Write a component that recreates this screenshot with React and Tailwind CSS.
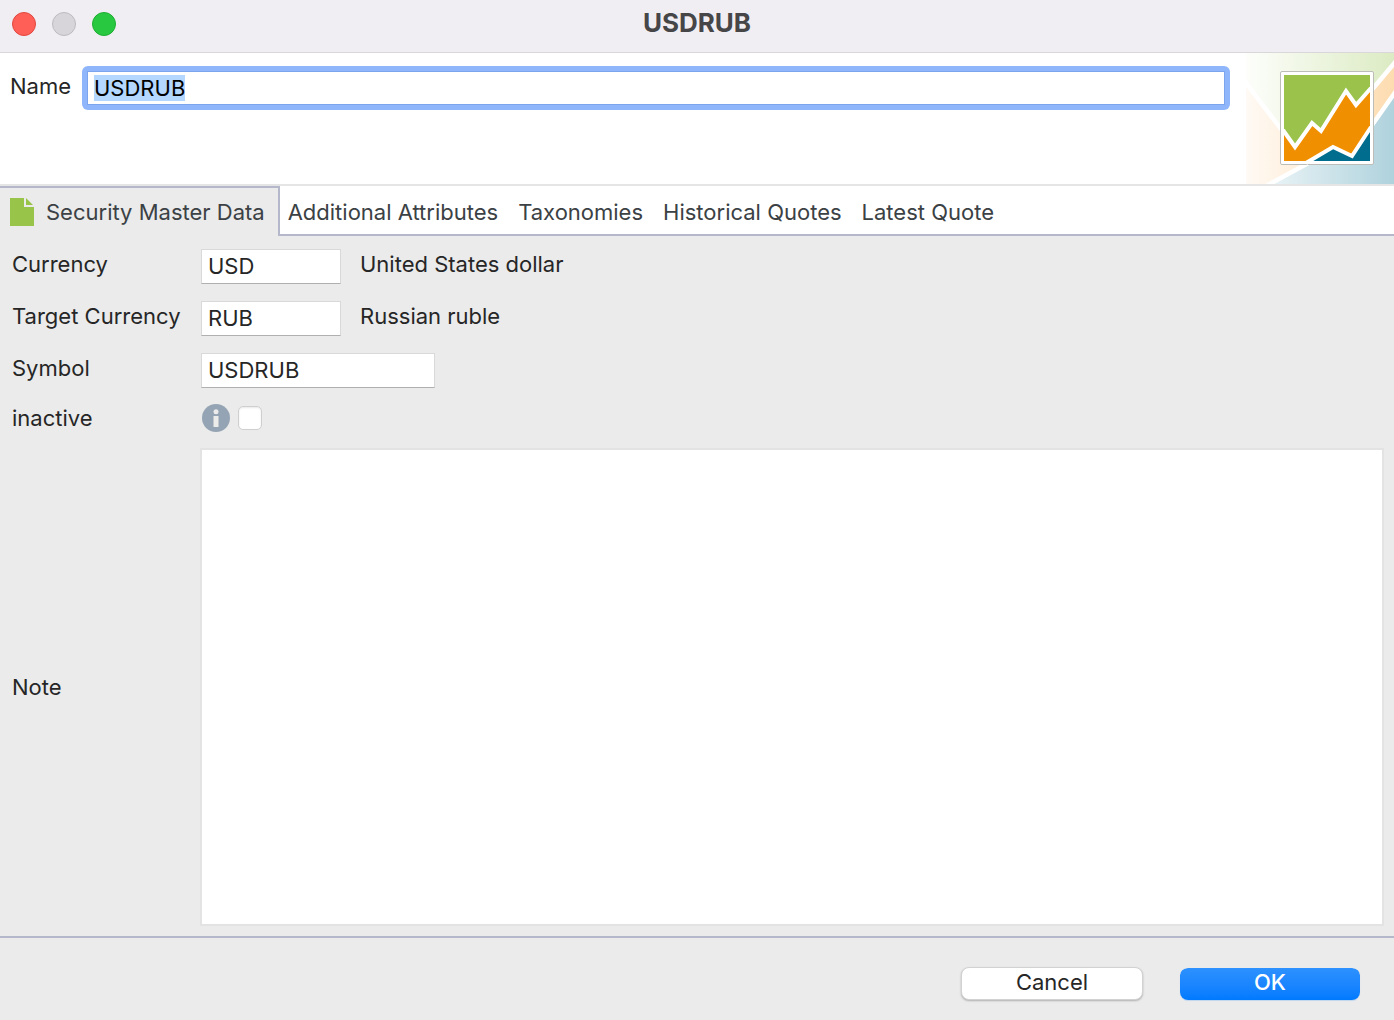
import { useEffect, useRef, useState } from "react";

const tabs = [
  "Additional Attributes",
  "Taxonomies",
  "Historical Quotes",
  "Latest Quote",
];

const field =
  "h-[35px] border border-[#d9d9d9] border-b-[#b0b0b0] bg-white px-1.5 pb-0.5 outline-none";

function TitleBar() {
  return (
    <header className="grid h-[53px] grid-cols-[1fr_auto_1fr] items-center border-b border-[#d9d7d9] bg-[#f0eef3] px-3 pb-1">
      <div className="flex gap-4">
        <button type="button" aria-label="Close" className="size-6 rounded-full border border-[#e2463f] bg-[#ff5f57]" />
        <button type="button" aria-label="Minimize" className="size-6 rounded-full border border-[#bdbbbf] bg-[#d7d5d9]" />
        <button type="button" aria-label="Zoom" className="size-6 rounded-full border border-[#1dae33] bg-[#28c840]" />
      </div>
      <h1 className="pb-0.5 text-[26px] leading-8 font-bold text-[#464547]">USDRUB</h1>
    </header>
  );
}

function Banner() {
  return (
    <svg width="148" height="131" viewBox="0 0 148 131" className="shrink-0" aria-hidden="true">
      <defs>
        <linearGradient id="fade-green">
          <stop offset="0" stopColor="#fdfefb" />
          <stop offset="1" stopColor="#dcebc3" />
        </linearGradient>
        <linearGradient id="fade-orange" gradientUnits="userSpaceOnUse" x1="0" x2="148" y1="0" y2="0">
          <stop offset="0" stopColor="#fffaf5" />
          <stop offset="1" stopColor="#fddcb0" />
        </linearGradient>
        <linearGradient id="fade-blue" gradientUnits="userSpaceOnUse" x1="0" x2="148" y1="0" y2="0">
          <stop offset="0" stopColor="#f5fafb" />
          <stop offset="1" stopColor="#afd2dd" />
        </linearGradient>
      </defs>
      <rect width="148" height="131" fill="url(#fade-green)" />
      <path d="M0 30 38 80 124 38 148 10V131H0Z" fill="url(#fade-orange)" />
      <path d="M23 132 63 110 124 75 148 41V132Z" fill="url(#fade-blue)" />
      <path d="M-3 26 38 80M124 39 150 8M20 133 66 108M124 75 150 38" fill="none" stroke="#fff" strokeWidth="4.5" />
      <rect x="34.5" y="18.5" width="93" height="93" rx="1.5" fill="#fff" stroke="#bcbcb8" />
      <rect x="38" y="22" width="86" height="86" fill="#9bc34b" />
      <path d="M38 79 49 94 66 69 75 78 100 38 110 52 124 36V108H38Z" fill="#f08f00" />
      <path d="M63 108 87 94 106 103 124 75V108Z" fill="#006d8f" />
      <path d="M37 77 49 94 66 70 75 78 100 38 110 52 125 35M60 110 87 94 106 103 125 74" fill="none" stroke="#fff" strokeWidth="4" />
    </svg>
  );
}

function DocumentIcon() {
  return (
    <svg width="24" height="28" viewBox="0 0 24 28" aria-hidden="true">
      <path d="M0 0H14V9H24V28H0Z" fill="#99c44a" />
      <path d="M16 0 23 7H16Z" fill="#99c44a" />
    </svg>
  );
}

function InfoIcon() {
  return (
    <svg width="28" height="28" viewBox="0 0 28 28" role="img" aria-label="Information">
      <circle cx="14" cy="14" r="14" fill="#95a4b4" />
      <circle cx="14" cy="7.7" r="2.5" fill="#ebebeb" />
      <path d="M11.5 12H16.5V23H11.5Z" fill="#ebebeb" />
    </svg>
  );
}

export default function App() {
  const nameRef = useRef(null);
  const [name, setName] = useState("USDRUB");
  useEffect(() => {
    nameRef.current.focus();
    nameRef.current.select();
  }, []);

  return (
    <form
      onSubmit={(e) => e.preventDefault()}
      className="flex min-h-screen flex-col bg-[#ebebeb] font-['Inter',sans-serif] text-[22px] leading-7 text-[#262626]"
    >
      <TitleBar />
      <div className="flex items-start border-b-2 border-[#e5e5e5] bg-white">
        <label htmlFor="name" className="w-[82px] shrink-0 pt-[19px] pl-2.5">Name</label>
        <div className="mt-[13px] mr-4 flex min-w-0 flex-1 rounded-md bg-[#8fb5fb] p-1.5">
          <input
            id="name"
            ref={nameRef}
            value={name}
            onChange={(e) => setName(e.target.value)}
            className="h-8 w-full min-w-0 bg-white px-1.5 text-black shadow-[0_0_0_1px_#7da5ed] outline-none selection:bg-[#b3d7ff] selection:text-black"
          />
        </div>
        <Banner />
      </div>

      <div role="tablist" className="flex h-[50px] text-[#3b4144]">
        <button type="button" role="tab" aria-selected="true" className="flex shrink-0 items-center gap-3 border-t-2 border-r-2 border-[#b5b8cb] pr-[13px] pl-2.5">
          <DocumentIcon />
          Security Master Data
        </button>
        <div className="flex flex-1 items-center gap-5 border-b-2 border-[#b5b8cb] bg-white pt-1 pl-2">
          {tabs.map((t) => (
            <button key={t} type="button" role="tab" aria-selected="false" className="whitespace-nowrap">
              {t}
            </button>
          ))}
        </div>
      </div>

      <main className="grid flex-1 grid-cols-[188px_1fr] grid-rows-[52px_52px_52px_44px_1fr] border-b-2 border-[#b5b8cb] pt-3 pr-2.5 pb-2.5 pl-3">
        <label htmlFor="currency" className="pt-0.5">Currency</label>
        <div className="flex items-start gap-[19px] pl-px">
          <input id="currency" defaultValue="USD" className={`${field} mt-px w-[140px]`} />
          <span className="pt-0.5">United States dollar</span>
        </div>
        <label htmlFor="target" className="pt-0.5">Target Currency</label>
        <div className="flex items-start gap-[19px] pl-px">
          <input id="target" defaultValue="RUB" className={`${field} mt-px w-[140px]`} />
          <span className="pt-0.5">Russian ruble</span>
        </div>
        <label htmlFor="symbol" className="pt-0.5">Symbol</label>
        <div className="flex items-start pl-px">
          <input id="symbol" defaultValue="USDRUB" className={`${field} mt-px w-[234px]`} />
        </div>
        <label htmlFor="inactive">inactive</label>
        <div className="flex h-7 items-center gap-2 pl-0.5">
          <InfoIcon />
          <input
            id="inactive"
            type="checkbox"
            className="size-6 appearance-none rounded-[5px] border border-[#cfcfcf] bg-white shadow-[inset_0_1px_2px_#00000018] checked:bg-[#0a7aff]"
          />
        </div>
        <label htmlFor="note" className="self-center">Note</label>
        <textarea id="note" className="block size-full resize-none border-2 border-[#e3e3e3] bg-white px-1.5 outline-none" />
      </main>

      <footer className="flex justify-end gap-[37px] px-[34px] pt-[29px] pb-5">
        <button type="button" className="flex h-[33px] w-[182px] justify-center rounded-lg border border-[#d2d2d2] bg-white leading-7 shadow-[0_1px_2px_#00000040]">
          Cancel
        </button>
        <button type="submit" className="flex h-[33px] w-[180px] justify-center rounded-lg border-t border-[#ebebeb] bg-linear-to-b from-[#2d91ff] to-[#007aff] bg-clip-padding leading-7 font-medium text-white shadow-[0_1px_1px_#007aff30]">
          OK
        </button>
      </footer>
    </form>
  );
}
